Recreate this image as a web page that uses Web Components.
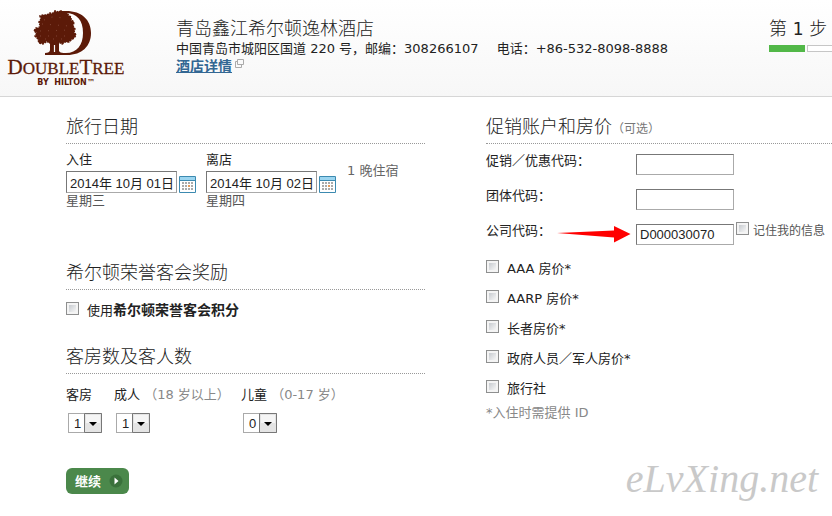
<!DOCTYPE html>
<html lang="zh-CN">
<head>
<meta charset="utf-8">
<title>青岛鑫江希尔顿逸林酒店</title>
<style>
body{margin:0;background:#fff;color:#222;font:13px/16px "DejaVu Sans","Noto Sans CJK SC",sans-serif;overflow-x:hidden}
</style>
</head>
<body>
<booking-page></booking-page>
<script>
const define = (name, html, setup) => customElements.define(name, class extends HTMLElement {
  connectedCallback() {
    if (this.shadowRoot) return;
    const t = document.createElement('template');
    t.innerHTML = '<style>*{box-sizing:border-box}</style>' + html;
    this.attachShadow({mode: 'open'}).append(t.content.cloneNode(true));
    if (setup) setup(this, this.shadowRoot);
  }
});

define('brand-logo', `
<style>
:host{display:flex;flex-direction:column;align-items:center;color:#5c1a08;width:132px;padding-top:10px}
svg{display:block;margin-right:6px}
.name{font:17px/18px "Liberation Serif",serif;-webkit-text-stroke:0.3px #5c1a08;margin-top:2px;white-space:nowrap}
.name b{font-size:21px;font-weight:400}
.by{font:bold 8px/10px "DejaVu Sans",sans-serif;white-space:pre}
</style>
<svg width="60" height="46" viewBox="33 9 60 46" aria-hidden="true">
<path fill="#5c1a08" fill-rule="evenodd" d="M59 10H66C82 10 91 19 91 32C91 45 82 54 67 54H45V52C48 52 50 51 50 49V38H59V50C60 52 63 52 66 52C77 52 83 44 83 32C83 19 77 12 65 12H59Z"/>
<path fill="#5c1a08" stroke="#5c1a08" stroke-width="1.6" stroke-dasharray="2 1" d="M47 14L50 12L52 13L55 10L58 11L61 10L63 12L67 12L69 15L71 16L71 19L74 21L73 25L75 28L74 31L76 34L74 37L71 39L69 41L65 41L62 43L59 41L56 44L53 42L49 42L47 40L43 43L39 42L38 38L35 35L37 32L34 30L36 27L39 27L40 24L39 21L41 18L40 15L43 14Z"/>
<path stroke="#fbfbfb" stroke-width="1.2" fill="none" d="M54.500 44V51"/>
<path stroke="#8f5848" stroke-width=".7" stroke-dasharray="1 7" fill="none" d="M44 19L52 16L65 17M42 23L69 25M40 30L70 29M40 35L71 35M45 38L65 38"/>
</svg>
<div class="name"><b>D</b>OUBLE<b>T</b>REE</div>
<div class="by">BY  HILTON™</div>`);

define('hotel-info', `
<style>
:host{display:block;min-width:0}
h1{font-weight:300;font-size:18px;line-height:22px;margin:0}
p{margin:0;line-height:18px;white-space:nowrap}
.tel{margin-left:14px}
a{color:#336793;font-weight:700;font-size:14px;line-height:16px}
svg{vertical-align:3px;margin-left:3px}
</style>
<h1>青岛鑫江希尔顿逸林酒店</h1>
<p>中国青岛市城阳区国道 220 号，邮编：308266107 <span class="tel">电话：+86-532-8098-8888</span></p>
<a href="#details">酒店详情</a><svg width="10" height="9" viewBox="0 0 10 9" fill="none" stroke="#aaa" aria-hidden="true"><path d="M2.500 .5H8.500V5.500H2.500Z M2.500 2.500H.5V8.500H6.500V5.500"/></svg>`);

define('step-progress', `
<style>
:host{display:block;font-size:18px;line-height:22px;width:63px;overflow:hidden;font-weight:300;white-space:nowrap}
::slotted(span){font-weight:400;font-size:17px}
div{display:flex;gap:2px;margin-top:5px}
i{flex:none;width:36px;height:7px;border:1px solid #c6c6c6;background:#fff}
i.on{background:#52b848;border-color:#52b848}
</style>
<slot></slot><div><i class="on"></i><i></i></div>`);

define('form-section', `
<style>
:host{display:block}
h2{font-weight:300;font-size:18px;line-height:24px;height:29px;margin:0;border-bottom:1px dotted #999}
::slotted(small){font-size:12px;color:#777;font-weight:400;line-height:16px}
</style>
<h2><slot name="title"></slot></h2><slot></slot>`);

define('date-field', `
<style>
:host{display:block;width:130px}
label{display:block;line-height:18px}
.row{display:flex;align-items:flex-end;gap:2px;margin-top:2px}
input{width:111px;height:22px;border:1px solid #aaa;border-top-color:#777;border-left-color:#777;border-right-color:#999;padding:0 3px;font:13px "Liberation Sans","Noto Sans CJK SC",sans-serif;color:#222;border-radius:0;background:#fff}
button{border:0;background:none;padding:0;display:block}
svg{display:block}
.day{color:#555;line-height:16px}
</style>
<label for="d"></label>
<div class="row"><input id="d" type="text"><button type="button" aria-label="日历"><svg width="17" height="17" viewBox="0 0 17 17"><path fill="#fff" stroke="#3c8ab0" d="M.5 .5H16.500V16.500H.5Z"/><path fill="#9bd5f0" d="M1 1H16V4H1Z"/><path stroke="#3c8ab0" d="M1 4.500H16"/><path stroke="#aaa" stroke-width="2" stroke-dasharray="2 1" d="M3 7H14M3 10H14M3 13H14"/><path fill="#e79a55" d="M9 9H11V11H9Z"/></svg></button></div>
<div class="day"><slot></slot></div>`, (el, r) => {
  r.querySelector('label').textContent = el.getAttribute('label');
  r.querySelector('input').value = el.getAttribute('value');
});

define('check-option', `
<style>
:host{display:flex;align-items:flex-start;gap:var(--gap,8px);line-height:16px}
input{appearance:none;flex:none;margin:0;width:13px;height:13px;border:1px solid #8e8f8f;background:linear-gradient(135deg,#c7cbd0,#f6f6f6) content-box,#f4f4f4;padding:2px;border-radius:0}
input:checked{background:#447}
label{white-space:nowrap;padding-top:1px}
</style>
<input type="checkbox" id="c"><label for="c"><slot></slot></label>`);

define('code-field', `
<style>
:host{display:flex;align-items:flex-start;height:35px}
.left{width:150px;display:flex;flex:none}
label{line-height:14px;white-space:nowrap}
input{width:98px;height:21px;border:1px solid #aaa;border-top-color:#777;border-left-color:#777;padding:0 3px;font:13px "Liberation Sans",sans-serif;color:#222;border-radius:0;background:#fff}
</style>
<div class="left"><label for="i"></label><slot name="pointer"></slot></div><input id="i" type="text"><slot></slot>`, (el, r) => {
  r.querySelector('label').textContent = el.getAttribute('label');
  r.querySelector('input').value = el.getAttribute('value') || '';
});

define('arrow-pointer', `
<style>:host{display:block;margin-left:6px;margin-top:2px}svg{display:block}</style>
<svg width="74" height="17" viewBox="0 0 74 17" aria-hidden="true"><path fill="#f00" d="M0 7L57 4.500V0L73.500 8L57 16.500V11.500Z"/></svg>`);

define('guest-select', `
<style>
:host{display:block}
label{display:block;line-height:18px;white-space:nowrap}
span{color:#888}
.box{display:grid;width:34px;height:20px;margin:9px 0 0 2px}
select,svg{grid-area:1/1}
select{appearance:none;width:34px;height:20px;border:1px solid #aaa;border-radius:0;background:#fff;padding:0 0 0 5px;font:13px "Liberation Sans",sans-serif;color:#222}
svg{justify-self:end;pointer-events:none}
</style>
<label for="s"></label>
<div class="box"><select id="s"></select><svg width="18" height="20" viewBox="0 0 18 20" aria-hidden="true"><path fill="#e4e4e4" stroke="#777" d="M.5 .5H17.500V19.500H.5Z"/><path fill="#f5f5f5" d="M2 2H16V10H2Z"/><path d="M5 9H13L9 13Z"/></svg></div>`, (el, r) => {
  const label = r.querySelector('label');
  label.textContent = el.getAttribute('label');
  if (el.getAttribute('note')) {
    const s = document.createElement('span');
    s.textContent = ' ' + el.getAttribute('note');
    label.append(s);
  }
  const v = Number(el.getAttribute('value'));
  for (let n = v; n < v + 4; n++) r.querySelector('select').add(new Option(n, n));
});

define('continue-button', `
<style>
:host{display:block}
button{display:flex;align-items:center;gap:8px;height:26px;padding:0 6px 0 9px;border:0;border-radius:6px;background:#4b884b;color:#fff;font:bold 13px/16px "Noto Sans CJK SC",sans-serif}
</style>
<button type="submit"><slot></slot><svg width="14" height="14" viewBox="0 0 14 14" aria-hidden="true"><circle cx="7" cy="7" r="6.500" fill="#3a713b"/><path fill="#fff" d="M5.500 3.500L9.500 7L5.500 10.500Z"/></svg></button>`);

define('booking-page', `
<style>
:host{display:block;position:relative;min-height:516px}
header{display:flex;height:97px;border-bottom:1px solid #d6d6d6;background:linear-gradient(#fff,#f7f7f7)}
hotel-info{margin:18px 0 0 44px}
step-progress{margin:18px 0 0 auto;flex:none}
form{display:grid;grid-template-columns:359fr 346fr;column-gap:61px;padding:18px 0 0 66px}
form>div{min-width:0}
.dates{display:flex;gap:10px;padding-top:7px;height:117px}
.nights{color:#666;margin-top:12px;white-space:nowrap;margin-left:1px}
.points{margin-top:12px;height:43px}
.points b{font-size:14px;line-height:1px}
.guests{display:grid;grid-template-columns:48px 127px 1fr;padding-top:12px;margin-bottom:35px}
.codes{padding-top:10px}
.remember{--gap:4px;margin:-2px 0 0 2px;font-size:12px;color:#555}
.rates{display:grid;gap:13px;margin-top:1px}
.rates check-option{height:17px}
.note{margin:8px 0 0;color:#888}
.mark{position:absolute;right:14px;bottom:14px;font:italic 40px/46px "Liberation Serif",serif;color:#c9c9c9}
</style>
<header><brand-logo></brand-logo><hotel-info></hotel-info><step-progress>第 <span>1</span> 步</step-progress></header>
<form>
<div>
<form-section><span slot="title">旅行日期</span>
<div class="dates"><date-field label="入住" value="2014年 10月 01日">星期三</date-field><date-field label="离店" value="2014年 10月 02日">星期四</date-field><div class="nights">1 晚住宿</div></div></form-section>
<form-section><span slot="title">希尔顿荣誉客会奖励</span>
<check-option class="points">使用<b>希尔顿荣誉客会积分</b></check-option></form-section>
<form-section><span slot="title">客房数及客人数</span>
<div class="guests"><guest-select label="客房" value="1"></guest-select><guest-select label="成人" note="（18 岁以上）" value="1"></guest-select><guest-select label="儿童" note="（0-17 岁）" value="0"></guest-select></div></form-section>
<continue-button>继续</continue-button>
</div>
<div>
<form-section><span slot="title">促销账户和房价</span><small slot="title">（可选）</small>
<div class="codes"><code-field label="促销／优惠代码："></code-field><code-field label="团体代码："></code-field><code-field label="公司代码：" value="D000030070"><arrow-pointer slot="pointer"></arrow-pointer><check-option class="remember">记住我的信息</check-option></code-field></div>
<div class="rates"><check-option>AAA 房价*</check-option><check-option>AARP 房价*</check-option><check-option>长者房价*</check-option><check-option>政府人员／军人房价*</check-option><check-option>旅行社</check-option></div>
<p class="note">*入住时需提供 ID</p></form-section>
</div>
</form>
<div class="mark">eLvXing.net</div>`);
</script>
</body>
</html>
